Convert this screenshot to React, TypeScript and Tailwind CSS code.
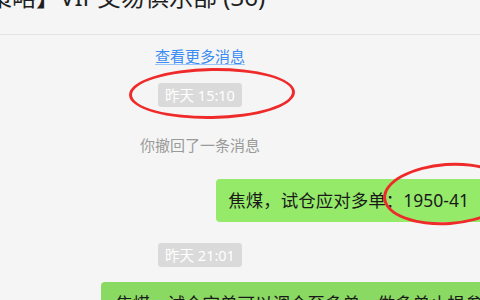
const font = { fontFamily: '"Noto Sans", "Noto Sans CJK SC", sans-serif' };

function TimeTag({ text }: { text: string }) {
  return (
    <div className="w-[400px] flex justify-center">
      <span className="h-[24px] px-[7px] rounded-[3px] bg-[#dadada] text-white text-[14.5px] leading-[24px]">
        {text}
      </span>
    </div>
  );
}

export default function App() {
  return (
    <div
      className="relative w-[480px] h-[300px] overflow-hidden bg-[#f5f5f5]"
      style={font}
    >
      {/* chat title, scrolled partly off the top */}
      <div className="h-[35px] border-b border-[#e4e4e4] overflow-hidden">
        <div className="-mt-[19px] -ml-[36px] whitespace-nowrap text-[24px] leading-[32px] text-[#1f1f1f]">
          【策略】VIP交易俱乐部 (36)
        </div>
      </div>

      <div className="flex flex-col">
        <div className="w-[400px] flex justify-center pt-[11px]">
          <a className="text-[15px] leading-[20px] text-[#3b8cf3] underline underline-offset-[2px] decoration-[#9cc4f8]">
            查看更多消息
          </a>
        </div>

        <div className="mt-[17px]">
          <TimeTag text="昨天 15:10" />
        </div>

        <div className="w-[400px] flex justify-center mt-[28px]">
          <span className="text-[15px] leading-[20px] text-[#9a9a9a]">
            你撤回了一条消息
          </span>
        </div>

        <div className="flex justify-end mt-[24px] -mr-[4px]">
          <div className="h-[43px] pl-[12px] pr-[15px] rounded-[4px] bg-[#95ea6a] text-[17.5px] leading-[43px] text-[#1a1a1a] whitespace-nowrap">
            焦煤，试仓应对多单：1950-41
          </div>
        </div>

        <div className="mt-[21px]">
          <TimeTag text="昨天 21:01" />
        </div>

        <div className="flex justify-start mt-[15px] pl-[101px]">
          <div className="h-[43px] pl-[14px] pr-[14px] rounded-[4px] bg-[#8ad962] text-[17.5px] leading-[43px] text-[#1a1a1a] whitespace-nowrap">
            焦煤，试仓空单可以调仓至多单，做多单止损参考1930
          </div>
        </div>
      </div>

      {/* red annotation rings */}
      <div className="absolute left-[129px] top-[68px] w-[166px] h-[51px] rounded-[50%] border-[3px] border-[#ef2a2a] -rotate-[1deg]" />
      <div className="absolute left-[383px] top-[163px] w-[130px] h-[62px] rounded-[50%] border-[3px] border-[#ef2a2a] -rotate-[4deg]" />
    </div>
  );
}
